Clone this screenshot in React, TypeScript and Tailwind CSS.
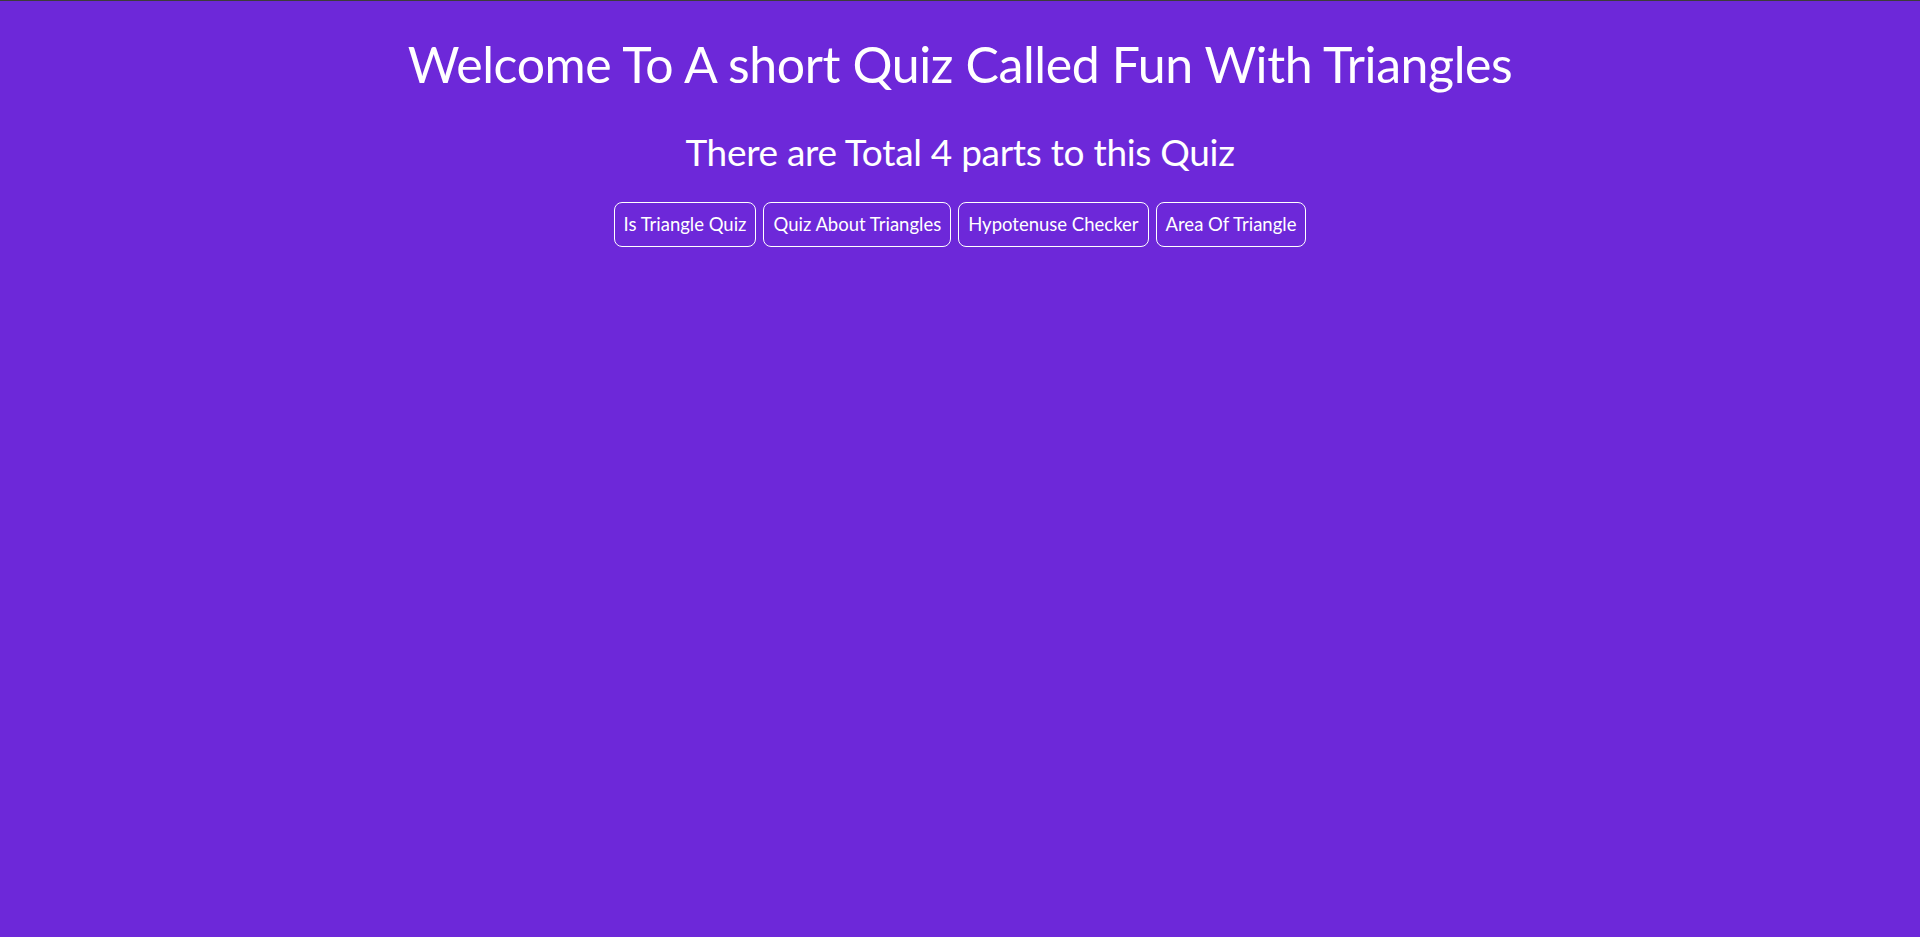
import React from "react";

export default function App() {
  const parts = ["Is Triangle Quiz", "Quiz About Triangles", "Hypotenuse Checker", "Area Of Triangle"];
  return (
    <div className="min-h-[937px] bg-[#6d28d9] border-t border-[#3c3c3c] text-white font-['Lato',sans-serif] flex flex-col items-center">
      <h1 className="mt-[33px] text-[50px] leading-[1.2] tracking-[-0.4px] font-normal">Welcome To A short Quiz Called Fun With Triangles</h1>
      <h2 className="mt-[36px] text-[37px] leading-[1.2] tracking-[-0.3px] font-normal">There are Total 4 parts to this Quiz</h2>
      <div className="mt-[28px] flex gap-[7px]">
        {parts.map((p) => (
          <button key={p} className="h-[45px] px-[9px] border border-white rounded-[8px] text-[18.5px] text-white">
            {p}
          </button>
        ))}
      </div>
    </div>
  );
}
